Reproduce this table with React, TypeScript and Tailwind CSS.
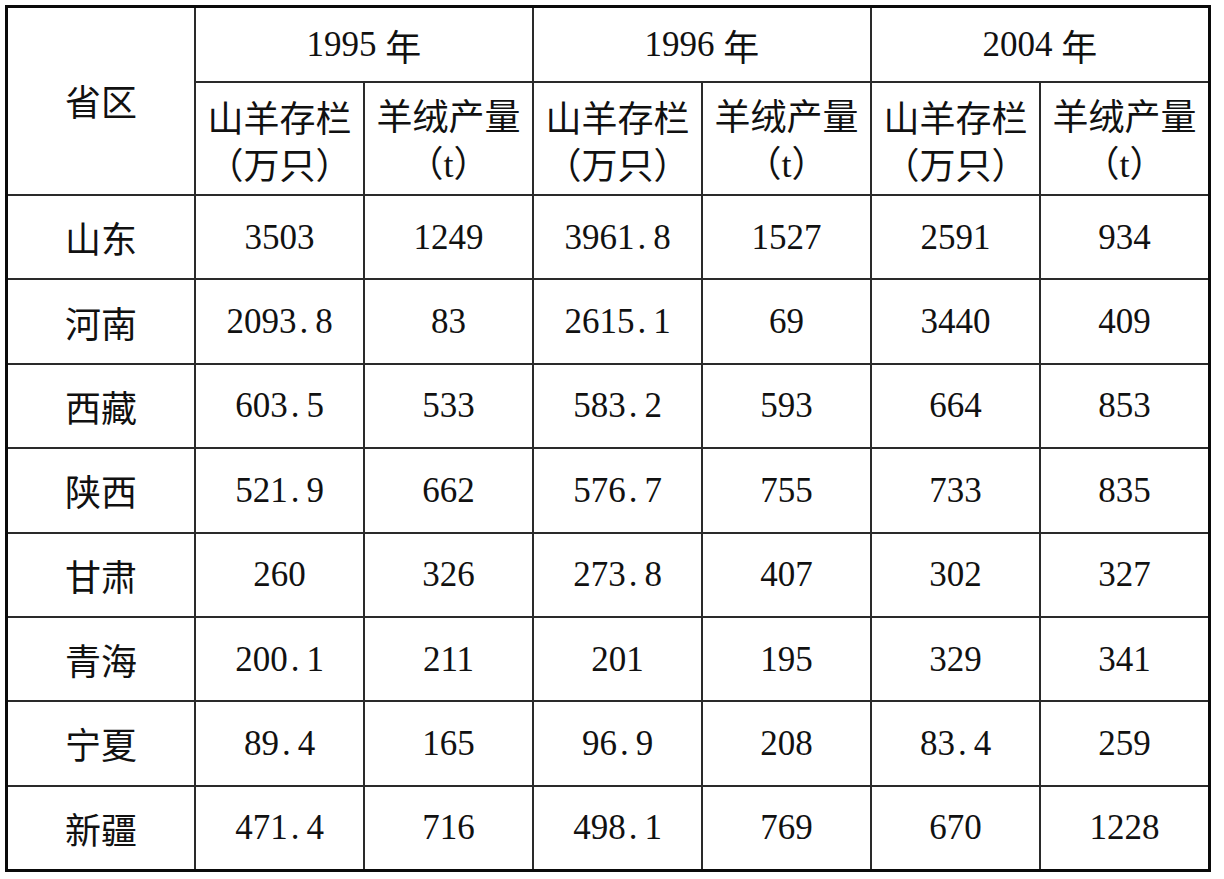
import React from "react";

const rows: [string, string, string, string, string, string, string][] = [
  ["山东", "3503", "1249", "3961.8", "1527", "2591", "934"],
  ["河南", "2093.8", "83", "2615.1", "69", "3440", "409"],
  ["西藏", "603.5", "533", "583.2", "593", "664", "853"],
  ["陕西", "521.9", "662", "576.7", "755", "733", "835"],
  ["甘肃", "260", "326", "273.8", "407", "302", "327"],
  ["青海", "200.1", "211", "201", "195", "329", "341"],
  ["宁夏", "89.4", "165", "96.9", "208", "83.4", "259"],
  ["新疆", "471.4", "716", "498.1", "769", "670", "1228"],
];

const serif = { fontFamily: '"Liberation Serif", "DejaVu Serif", serif' };

function Num({ v }: { v: string }) {
  const i = v.indexOf(".");
  if (i < 0) return <span style={serif}>{v}</span>;
  return (
    <span style={serif}>
      {v.slice(0, i)}
      <span className="ml-[3px] mr-[7px]">.</span>
      {v.slice(i + 1)}
    </span>
  );
}

const cell = "bg-white flex items-center justify-center text-center";

export default function App() {
  return (
    <div
      className="w-[1224px] h-[879px] bg-white text-[#111] text-[35px] leading-none"
      style={{ fontFamily: '"Noto Sans CJK SC", sans-serif' }}
    >
      <div className="pt-[5px] pl-[5px]">
        <div className="w-[1206px] h-[867px] border-[3px] border-[#0a0a0a] bg-[#2a2a2a]">
          <div className="grid h-[861px] gap-[2px] grid-cols-[186px_repeat(6,167px)] grid-rows-[73px_111px_repeat(8,1fr)]">
            <div className={`${cell} row-span-2 text-[36px] pb-[2px]`}>省区</div>
            {["1995", "1996", "2004"].map((y) => (
              <div key={y} className={`${cell} col-span-2`}>
                <span style={serif}>{y}&nbsp;</span>
                <span className="text-[36px]">年</span>
              </div>
            ))}
            {[0, 1, 2].map((k) => (
              <React.Fragment key={k}>
                <div className={`${cell} flex-col pt-[2px] text-[36px] leading-[36px] gap-[11px]`}>
                  <span>山羊存栏</span>
                  <span>（万只）</span>
                </div>
                <div className={`${cell} flex-col pt-[2px] text-[36px] leading-[36px] gap-[11px]`}>
                  <span>羊绒产量</span>
                  <span>
                    （<span style={serif}>t</span>）
                  </span>
                </div>
              </React.Fragment>
            ))}
            {rows.map((r) => (
              <React.Fragment key={r[0]}>
                {r.map((c, j) => (
                  <div key={j} className={j === 0 ? `${cell} text-[36px]` : cell}>
                    {j === 0 ? c : <Num v={c} />}
                  </div>
                ))}
              </React.Fragment>
            ))}
          </div>
        </div>
      </div>
    </div>
  );
}
